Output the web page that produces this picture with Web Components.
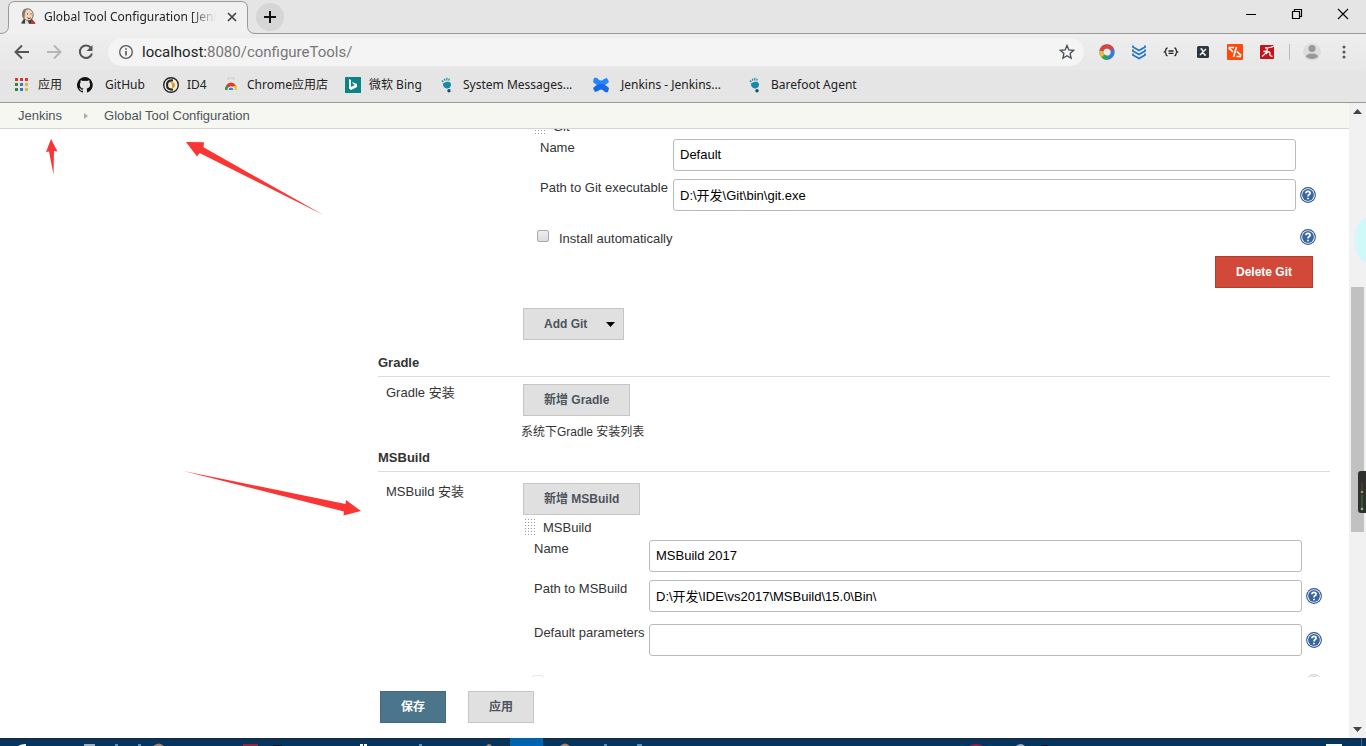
<!DOCTYPE html>
<html lang="zh-CN">
<head>
<meta charset="utf-8">
<title>Global Tool Configuration [Jenkins]</title>
<style>
html,body{margin:0;height:100%}
body{font:13px/16px "Liberation Sans","Noto Sans CJK SC",sans-serif;color:#333;background:#fff}
</style>
</head>
<body>
<browser-window>
  <tab-strip slot="chrome">Global Tool Configuration [Jenkins]</tab-strip>
  <nav-toolbar slot="chrome"></nav-toolbar>
  <bookmark-bar slot="chrome"></bookmark-bar>
  <bread-crumbs slot="page"></bread-crumbs>
  <tool-form slot="page"></tool-form>
  <save-bar slot="page"></save-bar>
  <page-scrollbar slot="scroll"></page-scrollbar>
  <arrow-notes slot="notes"></arrow-notes>
  <task-bar slot="task"></task-bar>
</browser-window>

<script>
const UI = '"Noto Sans","Noto Sans CJK SC",sans-serif';
let uid = 0;

function define(name, render) {
  customElements.define(name, class extends HTMLElement {
    connectedCallback() {
      if (this.shadowRoot) return;
      const t = document.createElement('template');
      t.innerHTML = '<style>:host,*{box-sizing:border-box}</style>' + render(this);
      this.attachShadow({ mode: 'open' }).append(t.content.cloneNode(true));
    }
  });
}

define('browser-window', () => `
<style>
:host{display:flex;flex-direction:column;height:100vh;position:relative;overflow:hidden}
header{flex:none}
.view{flex:1;min-height:0;display:flex}
main{flex:1;min-width:0;display:flex;flex-direction:column}
</style>
<header><slot name="chrome"></slot></header>
<div class="view"><main><slot name="page"></slot></main><slot name="scroll"></slot></div>
<slot name="task"></slot><slot name="notes"></slot>`);

define('tab-strip', () => `
<style>
:host{display:flex;height:34px;background:#e5e5e5;box-shadow:inset 0 -1px #999;font:12px/18px ${UI};color:#222}
.tab{position:relative;width:256px;padding:8px 20px 0;display:flex;gap:8px}
.edge{position:absolute;left:0;top:0}
.fav,.name,.tab button{position:relative}
.name{flex:1;overflow:hidden;white-space:nowrap;-webkit-mask:linear-gradient(90deg,#000 85%,transparent);mask:linear-gradient(90deg,#000 85%,transparent)}
button{border:0;padding:0;background:none;display:grid;place-items:center}
.tab button{width:16px;height:18px;margin-right:-4px}
.new{width:28px;height:28px;border-radius:50%;background:#d6d6d6;margin-top:3px}
.win{margin-left:auto;display:flex}
.win button{width:46px;height:28px}
</style>
<div class="tab">
 <svg class="edge" width="256" height="34" viewBox="0 0 256 34"><path d="M0 33.5Q8.500 33.500 8.500 26V8Q8.500 1.500 15 1.500H241Q247.500 1.500 247.500 8V26Q247.500 33.500 256 33.500V34H0Z" fill="#f0f0f0"/><path d="M0 33.500Q8.500 33.500 8.500 26V8Q8.500 1.500 15 1.500H241Q247.500 1.500 247.500 8V26Q247.500 33.500 256 33.500" fill="none" stroke="#999"/></svg>
 <svg class="fav" width="16" height="17" viewBox="0 0 16 17"><path d="M1 15.500l3-5 8 .5 3.500 5z" fill="#373a42"/><path d="M11 12l4 2v2h-4z" fill="#c33"/><ellipse cx="8" cy="6.800" rx="5.200" ry="6" fill="#f1d3b8" stroke="#65503f" stroke-width=".8"/><path d="M3 10C.5 3 4 0 8 .6 5 2 5 5 4.500 10z" fill="#8a7565"/><path d="M7 6h1M10.500 6h1M7.500 10q2 1 3 0" stroke="#433" fill="none"/><path d="M5 12l3 1 1 3H5z" fill="#ddd"/></svg>
 <span class="name"><slot></slot></span>
 <button aria-label="Close tab"><svg width="10" height="10"><path d="M1 1l8 8M9 1L1 9" stroke="#444" stroke-width="1.700"/></svg></button>
</div>
<button class="new" aria-label="New tab"><svg width="12" height="12"><path d="M6 0v12M0 6h12" stroke="#111" stroke-width="2"/></svg></button>
<div class="win">
 <button aria-label="Minimize"><svg width="12" height="12"><path d="M1 6.500h10" stroke="#000"/></svg></button>
 <button aria-label="Restore"><svg width="12" height="12" fill="none" stroke="#000" stroke-width="1.200"><path d="M1.500 3.500h7v7h-7zM3.500 3V1.500h7v7H9"/></svg></button>
 <button aria-label="Close"><svg width="12" height="12"><path d="M1 1l10 10M11 1L1 11" stroke="#000" stroke-width="1.100"/></svg></button>
</div>`);

define('nav-toolbar', () => `
<style>
:host{display:flex;align-items:center;height:36px;padding:0 14px;background:linear-gradient(#eeeeee,#e7e7e7);font:15px/20px Roboto,sans-serif}
button{border:0;padding:0;background:none;width:16px;height:16px;display:grid;place-items:center}
nav,.ext{display:flex;gap:16px;align-items:center}
.box{flex:1;display:flex;align-items:center;gap:8px;height:28px;border-radius:14px;background:#f4f4f4;margin:0 15px 0 14px;padding:0 9px 0 10px}
.box a{flex:1;color:#777;text-decoration:none}
.box b{font-weight:400;color:#222}
i{width:1px;height:16px;background:#bbb;margin:0 -2px}
</style>
<nav>
 <button aria-label="Back"><svg width="16" height="16" fill="none" stroke="#555" stroke-width="1.900"><path d="M15 8H2M8 1.500L1.500 8 8 14.500"/></svg></button>
 <button aria-label="Forward"><svg width="16" height="16" fill="none" stroke="#b5b5b5" stroke-width="1.900"><path d="M1 8h13M8 1.500L14.500 8 8 14.500"/></svg></button>
 <button aria-label="Reload"><svg width="16" height="16"><path d="M13 4A6.200 6.200 0 1 0 14 9.500" fill="none" stroke="#555" stroke-width="2"/><path d="M14.500 1v6h-6z" fill="#555"/></svg></button>
</nav>
<div class="box">
 <svg width="16" height="16"><circle cx="8" cy="8" r="6.300" fill="none" stroke="#555" stroke-width="1.300"/><path d="M8 7v4.500M8 4.200v1.600" stroke="#555" stroke-width="1.600"/></svg>
 <a href="#"><b>localhost:</b>8080/configureTools/</a>
 <button aria-label="Bookmark"><svg width="16" height="16"><path d="M8 1.500l1.900 4.400 4.800.4-3.600 3.200 1 4.700L8 11.700l-4.100 2.500 1-4.700L1.300 6.300l4.800-.4z" fill="none" stroke="#454b54" stroke-width="1.300"/></svg></button>
</div>
<div class="ext">
 <svg width="16" height="16" fill="none" stroke-width="4"><circle cx="8" cy="8" r="5.700" stroke="#3c78d8"/><path d="M2.500 6.500A5.700 5.700 0 0 1 13 5.500" stroke="#db4437"/><path d="M2.400 7A5.700 5.700 0 0 0 4.500 12.500" stroke="#f4b92f"/><path d="M4 12A5.700 5.700 0 0 0 9 13.600" stroke="#27a35a"/></svg>
 <svg width="16" height="16" fill="none" stroke="#2878c8" stroke-width="1.900"><path d="M2 1.500v1.500l6 3.500 6-3.500V1.500M2 5.500v1.500l6 3.500 6-3.500V5.500M2 9.500v1.500l6 3.500 6-3.500V9.500"/></svg>
 <svg width="16" height="16" fill="none" stroke="#222" stroke-width="1.300"><path d="M4.500 4Q3 4 3 5.500T1.500 8Q3 8.500 3 10t1.500 2M11.500 4Q13 4 13 5.500T14.500 8Q13 8.500 13 10t-1.500 2M5.500 7h5M5.500 9.300h5"/></svg>
 <svg width="16" height="16"><rect x="2" y="2" width="12" height="12" rx="1.500" fill="#2c3742"/><path d="M5.500 5h1.200l3 6h1.200M11 5L5 11" stroke="#fff" stroke-width="1.400" fill="none"/></svg>
 <svg width="16" height="16"><rect width="16" height="16" rx="1" fill="#ff4a0d"/><path d="M7 3.500H2.500q-.5 1.500 1 2L6 8M9.500 3l-3 10M14 12.500H9.500M13.500 12q.5-1.500-1-2L10 7.500" fill="none" stroke="#fff" stroke-width="1.700"/></svg>
 <svg width="16" height="16"><rect x="1" y="1" width="14" height="14" rx="1" fill="#c5121b"/><path d="M6 4q5 0 9-2M8.500 4.500Q8 9 3 12.500M7 10q3-4 4-1-1 3 2.500 3.500M4.500 7.500l4-.5" fill="none" stroke="#fff" stroke-width="1.300"/></svg>
 <i></i>
 <svg width="16" height="16" overflow="visible"><circle cx="8" cy="8" r="9" fill="#dedede"/><circle cx="8" cy="4.500" r="3.500" fill="#999"/><path d="M2 13q0-3.500 6-3.500t6 3.500q-3 2-6 2t-6-2z" fill="#999"/></svg>
 <button aria-label="Menu"><svg width="16" height="16" fill="#555"><circle cx="8" cy="3" r="1.500"/><circle cx="8" cy="8" r="1.500"/><circle cx="8" cy="13" r="1.500"/></svg></button>
</div>`);

const foot = '<path d="M4 6.500Q7 4 10.500 5q2.500 2 1 4.500-1 2.500-4 2Q3.500 10 4 6.500z" fill="#168aa8"/><path d="M3 3.500l1.300 1.500M5.300 1.800l.7 2M7.800.8v2.600M10.300 1.600l-.6 2" fill="none" stroke="#168aa8" stroke-width="1.200"/><circle cx="10" cy="13.700" r="1.700" fill="#164e70"/>';
const apps = ['#d33','#d33','#d33','#383','#37c','#db3','#383','#37c','#db3'].map((c, i) => `<rect x="${i % 3 * 5 + 1}" y="${Math.floor(i / 3) * 5 + 1}" width="3" height="3" fill="${c}"/>`).join('');
const marks = [
 ['应用', apps],
 ['GitHub', '<path d="M8 0a8 8 0 0 0-2.500 15.600c.4.1.5-.2.500-.4v-1.500c-2.200.5-2.700-1-2.700-1-.4-.9-.9-1.200-.9-1.200-.7-.5.1-.5.1-.5.800.1 1.200.8 1.200.8.700 1.200 1.900.9 2.300.7.100-.5.300-.9.500-1.100-1.800-.2-3.600-.9-3.600-4 0-.9.300-1.600.8-2.100-.1-.2-.4-1 .1-2.100 0 0 .7-.2 2.200.8a8 8 0 0 1 4 0c1.500-1 2.200-.8 2.200-.8.500 1.100.2 1.900.1 2.100.5.500.8 1.200.8 2.100 0 3.100-1.900 3.800-3.600 4 .3.200.5.700.5 1.500v2.200c0 .2.100.5.500.4A8 8 0 0 0 8 0z" fill="#111"/>', 'wide'],
 ['ID4', '<circle cx="8" cy="8" r="7.300" fill="#f7eedb" stroke="#252525" stroke-width="1.400"/><path d="M10 3.500Q4 3 4 8t6 4.500" fill="none" stroke="#292929" stroke-width="2.200"/><path d="M7 5q5 0 5 3t-3 3V7z" fill="#e29a25"/>'],
 ['Chrome应用店', '<path d="M5 3V1h6v2" fill="none" stroke="#ccc"/><path d="M2 13a6 7.500 0 0 1 12 0z" fill="#e33b2e"/><path d="M2 13a6 6 0 0 1 1.500-4.500L7 13z" fill="#2c9b4b"/><path d="M10 9h3.500q.7 2 .5 4h-4z" fill="#f7c52d"/><path d="M4.500 13a3.500 3.500 0 0 1 7 0z" fill="#fff"/><path d="M5.500 13a2.500 2.500 0 0 1 5 0z" fill="#3d7fe0"/>'],
 ['微软 Bing', '<path fill="#0c8484" d="M0 0h16v16H0z"/><path d="M4 2l2 1v7l4-2-2-1-1-2 5 2v3l-6 3-2-1.500z" fill="#fff"/>'],
 ['System Messages...', foot],
 ['Jenkins - Jenkins...', '<path d="M1 1q3-1 4 1 3 3 6 0l3-1 2 4q-4 4-8 4T0 5z" fill="#2684ff"/><path d="M15 15q-3 1-4-1-3-3-6 0l-3 1-2-4q4-4 8-4t8 4z" fill="#1769e8"/>', 'wide'],
 ['Barefoot Agent', foot]
];
define('bookmark-bar', () => `
<style>
:host{display:grid;grid-template-columns:63px 86px 60px 122px 94px 154px 154px 1fr;align-items:center;height:33px;padding:0 14px 3px;border-bottom:1px solid #999;background:#e5e5e5;font:12px/18px ${UI}}
a{display:flex;align-items:center;gap:8px;color:#222;text-decoration:none;white-space:nowrap}
.wide{gap:12px}
svg{flex:none}
</style>${marks.map(m => `<a href="#" class="${m[2] || ''}"><svg width="16" height="16" viewBox="0 0 16 16">${m[1]}</svg>${m[0]}</a>`).join('')}`);

define('bread-crumbs', () => `
<style>
:host{flex:none;display:flex;align-items:center;height:26px;padding:0 18px;background:#f6f7f0;border-bottom:1px solid #d3d7cf}
a{color:#4d545d;text-decoration:none}
svg{margin:0 15px 0 21px}
</style><a href="#">Jenkins</a><svg width="6" height="8"><path d="M1 1l4 3-4 3z" fill="#aaa"/></svg><a href="#">Global Tool Configuration</a>`);

define('help-icon', () => `
<style>:host{display:block;width:16px;height:16px}button{display:block;border:0;padding:0;background:none}</style>
<button type="button" aria-label="Help"><svg width="16" height="16" viewBox="0 0 16 16"><circle cx="8" cy="8" r="7.900" fill="#2f558e"/><circle cx="8" cy="8" r="6.800" fill="#fff"/><circle cx="8" cy="8" r="5.900" fill="#3866a4"/><path d="M5.900 6.300Q6 4.300 8 4.300t2.100 1.800Q10 7.200 8.800 7.800 8 8.300 8 9.600M8 10.700v1.600" fill="none" stroke="#fff" stroke-width="1.700"/></svg></button>`);

define('jk-button', el => `
<style>
:host{display:inline-block;vertical-align:top}
button{display:flex;align-items:center;height:32px;padding:0 20px;border:1px solid #c6c6c6;background:#e0e0e0;color:#4d545d;font:bold 12px/16px "Liberation Sans","Noto Sans CJK SC",sans-serif;white-space:nowrap}
:host([kind=danger]) button{background:#d24939;border-color:#b23c2f;color:#fff}
:host([kind=primary]) button{background:#4b758b;border-color:#436a7e;color:#fff}
:host([menu]) button{padding-right:8px;gap:19px}
</style><button type="button"><slot></slot>${el.hasAttribute('menu') ? '<svg width="9" height="5"><path d="M0 0h9L4.500 5z" fill="#000"/></svg>' : ''}</button>`);

define('drag-title', () => `
<style>
:host{display:flex;gap:7px;align-items:flex-end}
.grip{width:12px;height:18px;background:radial-gradient(circle,#999 0 1px,transparent 1px) 0 0/3px 3px}
</style><span class="grip"></span><slot></slot>`);

define('text-field', el => {
  const id = 'f' + (++uid);
  return `
<style>
:host{display:grid;grid-template-columns:var(--label,133px) minmax(0,1fr) 20px}
input{height:32px;width:100%;border:1px solid #bbb;border-radius:3px;padding:0 6px 2px;font:inherit;color:#000;background:#fff;outline:0}
help-icon{margin:8px 0 0 4px}
label{white-space:nowrap;padding-top:1px}
</style><label for="${id}">${el.getAttribute('label')}</label><input id="${id}" type="text" value="${el.getAttribute('value') || ''}">${el.hasAttribute('help') ? '<help-icon></help-icon>' : ''}`;
});

define('check-field', () => `
<style>
:host{display:flex;justify-content:space-between;height:16px}
label{display:flex;gap:10px;line-height:20px}
input{appearance:none;width:12px;height:12px;margin:1px 0 0;border:1px solid #aaa;border-radius:2px;background:linear-gradient(#eee,#ddd)}
</style><label><input type="checkbox" aria-label="Install automatically"><slot></slot></label><help-icon></help-icon>`);

define('form-section', el => `
<style>
:host{display:block}
h2{margin:0;padding-bottom:6px;border-bottom:1px solid #ddd;font:bold 13px/14px "Liberation Sans",sans-serif;color:#333}
.row{display:grid;grid-template-columns:143px minmax(0,1fr);padding-top:var(--gap,7px)}
.label{padding:1px 0 0 8px}
</style>${el.getAttribute('heading') ? `<h2>${el.getAttribute('heading')}</h2>` : ''}
<div class="row"><span class="label">${el.getAttribute('label') || ''}</span><div><slot></slot></div></div>`);

define('tool-form', () => `
<style>
:host{display:block;flex:1;min-height:0;overflow:hidden;padding:0 19px 0 378px}
jk-button{margin-left:2px}
.git{--gap:0px;margin-bottom:16px}
.git drag-title{height:6px;overflow:hidden;margin:0 0 4px 13px}
.fields{display:flex;flex-direction:column;gap:8px}
.g{margin:0 14px 0 19px}
.m{--label:115px;margin:4px 8px 0 13px}
.g check-field{margin:18px 0 11px -3px}
.m check-field{margin:18px 0 0 -2px;opacity:.25}
.del{display:flex;justify-content:flex-end;margin:0 17px 20px 0}
.desc{font-size:12px;margin:8px 0 11px}
.ms{--gap:11px}
.ms drag-title{margin:3px 0 0 3px}
.last{margin-top:4px}
</style>
<form-section class="git">
 <drag-title>Git</drag-title>
 <div class="g"><div class="fields"><text-field label="Name" value="Default"></text-field>
 <text-field label="Path to Git executable" value="D:\\开发\\Git\\bin\\git.exe" help></text-field></div>
 <check-field>Install automatically</check-field></div>
 <div class="del"><jk-button kind="danger">Delete Git</jk-button></div>
 <jk-button menu>Add Git</jk-button>
</form-section>
<form-section heading="Gradle" label="Gradle 安装"><jk-button>新增 Gradle</jk-button><div class="desc">系统下Gradle 安装列表</div></form-section>
<form-section class="ms" heading="MSBuild" label="MSBuild 安装"><jk-button>新增 MSBuild</jk-button>
 <drag-title>MSBuild</drag-title>
 <div class="m"><div class="fields"><text-field label="Name" value="MSBuild 2017"></text-field>
 <text-field label="Path to MSBuild" value="D:\\开发\\IDE\\vs2017\\MSBuild\\15.0\\Bin\\" help></text-field>
 <text-field class="last" label="Default parameters" help></text-field></div>
 <check-field></check-field></div>
</form-section>`);

define('save-bar', () => `
<style>:host{flex:none;display:flex;gap:22px;padding:14px 0 15px 380px;background:#fff}</style>
<jk-button kind="primary">保存</jk-button><jk-button>应用</jk-button>`);

define('page-scrollbar', () => `
<style>
:host{flex:none;width:17px;display:flex;flex-direction:column;align-items:center;background:#f1f1f1;position:relative}
.end{height:17px;display:grid;place-items:center}
.a{flex:167}.thumb{flex:245;width:13px;background:#c1c1c1}.b{flex:189}
.bubble{position:absolute;right:0;top:115px;width:11px;height:44px;background:#cff8f8;border-radius:11px 0 0 11px/22px 0 0 22px}
.dock{position:absolute;right:0;top:368px;width:8px;height:42px;border-radius:3px 0 0 3px;background:#2d302c}
.dock svg{display:block}
</style>
<span class="end"><svg width="9" height="5"><path d="M0 5L4.500 0 9 5z" fill="#444"/></svg></span>
<span class="a"></span><span class="thumb"></span><span class="b"></span>
<span class="end"><svg width="9" height="5"><path d="M0 0h9L4.500 5z" fill="#444"/></svg></span>
<span class="bubble"></span><span class="dock"><svg width="8" height="42"><path d="M4 12v10" stroke="#5f4927"/><path d="M4 24v14" stroke="#3e7d48"/><circle cx="4" cy="21" r="1.300" fill="#b88b42"/><circle cx="4" cy="38" r="1.300" fill="#8cc26b"/></svg></span>`);

define('arrow-notes', () => `
<style>:host{position:absolute;left:0;top:103px;pointer-events:none}svg{display:block}</style>
<svg width="370" height="420" viewBox="0 103 370 420" fill="#fa3534"><path d="M51 139l6.500 12.500-3.500-.5-.5 23.500L49 151.500l-3 .5z"/><path d="M186 142l18 .300-.500 5L323.500 215 199.500 153l-2.500 3.500z"/><path d="M183.500 471L345.500 504l.500-4 15 11-17.500 4.500.5-4z"/></svg>`);

define('task-bar', () => `
<style>:host{display:block;flex:none;height:8px;overflow:hidden;background:linear-gradient(#132c44,#06345c 40%)}svg{display:block}</style>
<svg width="100%" height="8"><path d="M510 0h33v8h-33z" fill="#0063ae"/><path d="M18 8q3-2 8-2v2zM1326 6h16v2h-16zM360 6h3v2h-3zM364 6h3v2h-3z" fill="#fff"/><path d="M84 6h11v2H84zM1016 8q5-4 9 0z" fill="#a9adb0"/><path d="M115 6h3v2h-3zM138 6h3v2h-3zM419 6h3v2h-3zM604 6h3v2h-3zM637 6h5v2h-5z" fill="#5b91b8"/><path d="M153 8q6-5 11 0zM486 8q3-4 6 0zM560 8q5-5 10 0z" fill="#bd7b54"/><path d="M243 6h15v2h-15zM969 8q7-4 14 0z" fill="#a51c36"/><path d="M273 7h9v1h-9zM1041 7h7v1h-7z" fill="#091018"/><path d="M1361 0h1v8h-1z" fill="#446783"/></svg>`);
</script>
</body>
</html>
